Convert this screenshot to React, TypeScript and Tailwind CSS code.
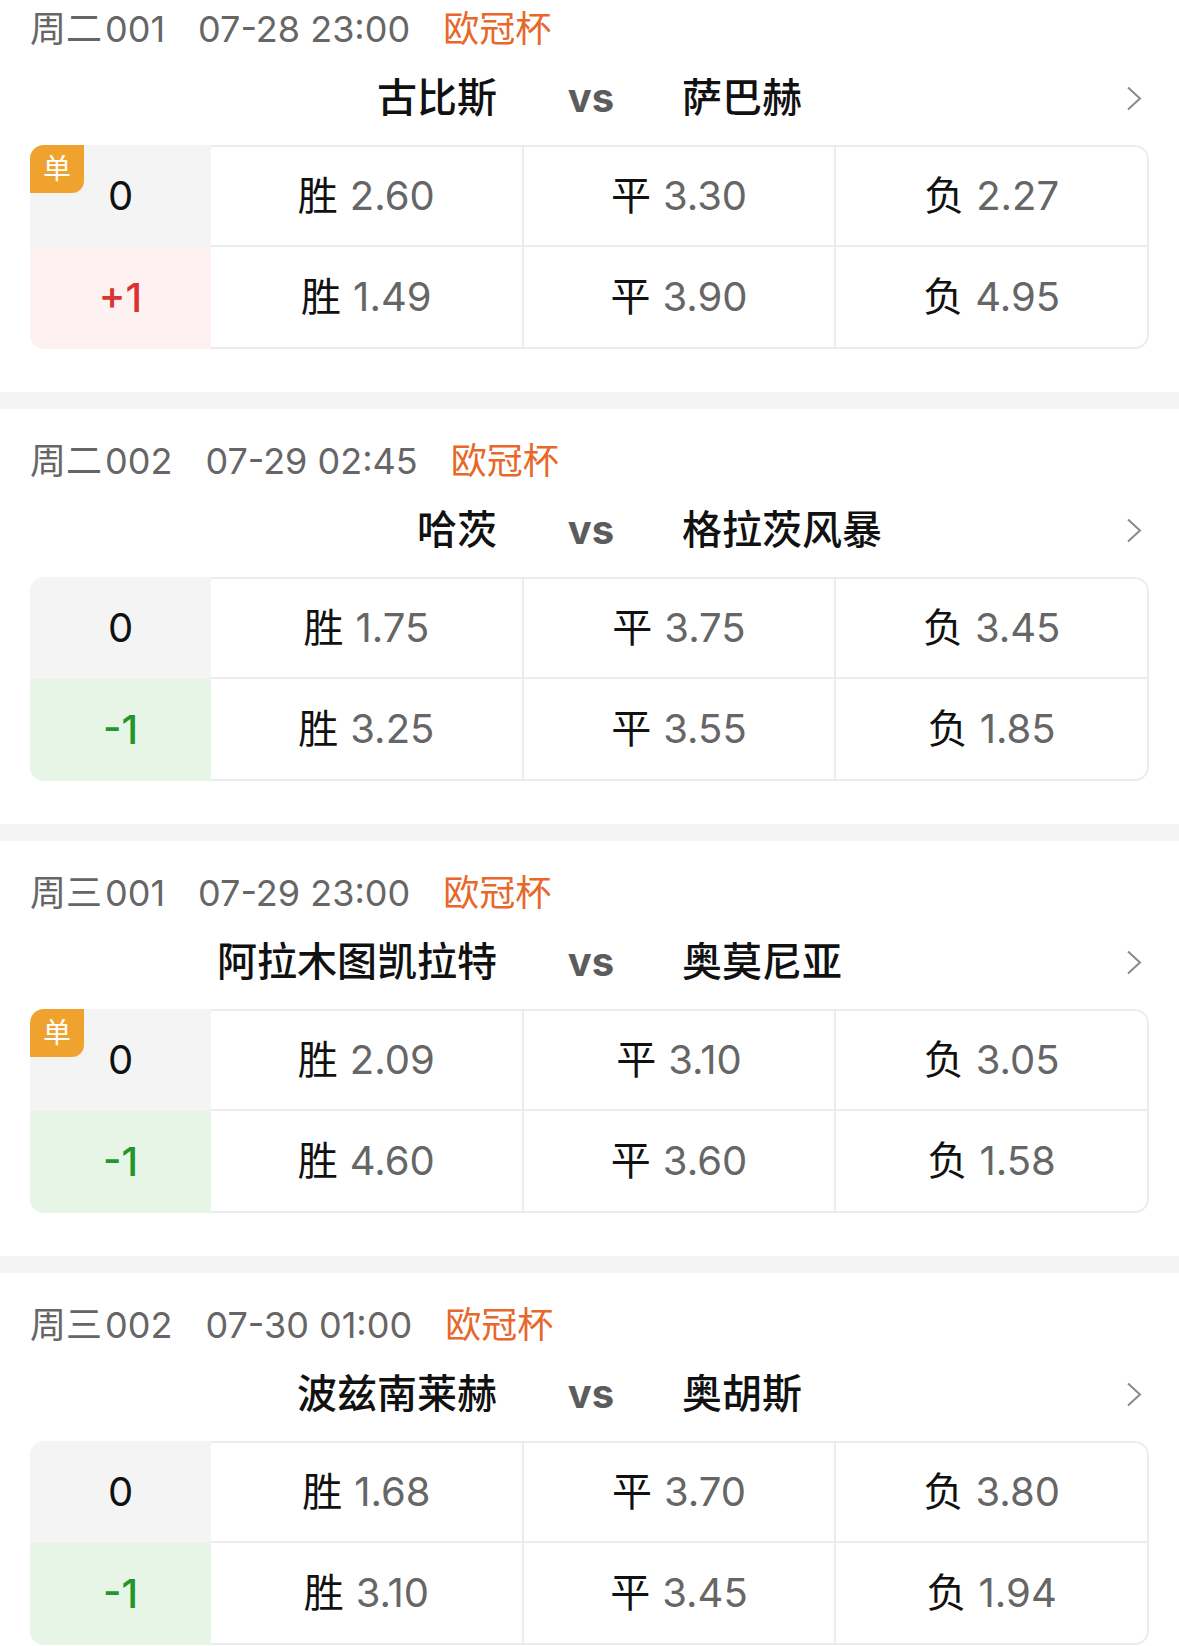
type Match = {
  day: string;
  num: string;
  time: string;
  league: string;
  home: string;
  away: string;
  single: boolean;
  handicap: string;
  odds: string[];
  hOdds: string[];
};

const matches: Match[] = [
  {
    day: "周二",
    num: "001",
    time: "07-28 23:00",
    league: "欧冠杯",
    home: "古比斯",
    away: "萨巴赫",
    single: true,
    handicap: "+1",
    odds: ["2.60", "3.30", "2.27"],
    hOdds: ["1.49", "3.90", "4.95"],
  },
  {
    day: "周二",
    num: "002",
    time: "07-29 02:45",
    league: "欧冠杯",
    home: "哈茨",
    away: "格拉茨风暴",
    single: false,
    handicap: "-1",
    odds: ["1.75", "3.75", "3.45"],
    hOdds: ["3.25", "3.55", "1.85"],
  },
  {
    day: "周三",
    num: "001",
    time: "07-29 23:00",
    league: "欧冠杯",
    home: "阿拉木图凯拉特",
    away: "奥莫尼亚",
    single: true,
    handicap: "-1",
    odds: ["2.09", "3.10", "3.05"],
    hOdds: ["4.60", "3.60", "1.58"],
  },
  {
    day: "周三",
    num: "002",
    time: "07-30 01:00",
    league: "欧冠杯",
    home: "波兹南莱赫",
    away: "奥胡斯",
    single: false,
    handicap: "-1",
    odds: ["1.68", "3.70", "3.80"],
    hOdds: ["3.10", "3.45", "1.94"],
  },
];

const labels = ["胜", "平", "负"];

function OddsRow({ values, top }: { values: string[]; top?: boolean }) {
  return (
    <div
      className={
        "flex h-[102px] border-r-2 border-b-2 border-[#ececec] " +
        (top ? "border-t-2 rounded-tr-[14px]" : "rounded-br-[14px]")
      }
    >
      {values.map((v, i) => (
        <div
          key={i}
          className={
            "flex-1 flex items-center justify-center text-[40px] " +
            (i < 2 ? "border-r-2 border-[#ececec]" : "")
          }
        >
          <span className="text-[#111]">{labels[i]}</span>
          <span className="ml-[12px] text-[#666]">{v}</span>
        </div>
      ))}
    </div>
  );
}

function MatchCard({ m, first }: { m: Match; first?: boolean }) {
  const plus = m.handicap.startsWith("+");
  return (
    <div>
      {!first && <div className="h-[17px] bg-[#f4f4f4]" />}
      <div className={"px-[30px] pb-[43px] " + (first ? "pt-[9px]" : "pt-[32px]")}>
        {/* header */}
        <div className="h-[40px] flex items-center text-[36px] text-[#666]">
          <span>{m.day}</span>
          <span className="ml-[3px]">{m.num}</span>
          <span className="ml-[33px]">{m.time}</span>
          <span className="ml-[33px] text-[#e8672a]">{m.league}</span>
        </div>

        {/* teams */}
        <div className="relative mt-[25px] h-[48px] flex items-center">
          <div className="flex-1 text-right text-[40px] font-medium text-[#111] pr-[70px]">
            {m.home}
          </div>
          <div className="w-[48px] text-center text-[40px] font-bold text-[#5c5c5c]">vs</div>
          <div className="flex-1 text-left text-[40px] font-medium text-[#111] pl-[67px]">
            {m.away}
          </div>
          <svg
            className="absolute right-[7px] top-[12px]"
            width="16"
            height="25"
            viewBox="0 0 16 25"
            fill="none"
          >
            <polyline points="2,1.5 14,12.5 2,23.5" stroke="#8a8a8a" strokeWidth="2" />
          </svg>
        </div>

        {/* odds table */}
        <div className="mt-[23px] flex rounded-[14px] overflow-hidden">
          <div className="relative w-[181px] flex flex-col">
            <div className="h-[102px] flex items-center justify-center bg-[#f4f4f4] text-[40px] text-[#111]">
              0
            </div>
            <div
              className={
                "h-[102px] flex items-center justify-center text-[40px] font-medium " +
                (plus ? "bg-[#fdf1f1] text-[#d9342f]" : "bg-[#e7f5e7] text-[#24952a]")
              }
            >
              {m.handicap}
            </div>
            {m.single && (
              <div className="absolute left-0 top-0 w-[54px] h-[48px] bg-[#f0a22f] rounded-br-[12px] flex items-center justify-center text-[28px] text-white">
                单
              </div>
            )}
          </div>
          <div className="flex-1 flex flex-col">
            <OddsRow values={m.odds} top />
            <OddsRow values={m.hOdds} />
          </div>
        </div>
      </div>
    </div>
  );
}

export default function App() {
  return (
    <div
      className="w-[1179px] bg-white"
      style={{ fontFamily: 'Inter, "Noto Sans CJK SC", sans-serif' }}
    >
      {matches.map((m, i) => (
        <MatchCard key={i} m={m} first={i === 0} />
      ))}
    </div>
  );
}
